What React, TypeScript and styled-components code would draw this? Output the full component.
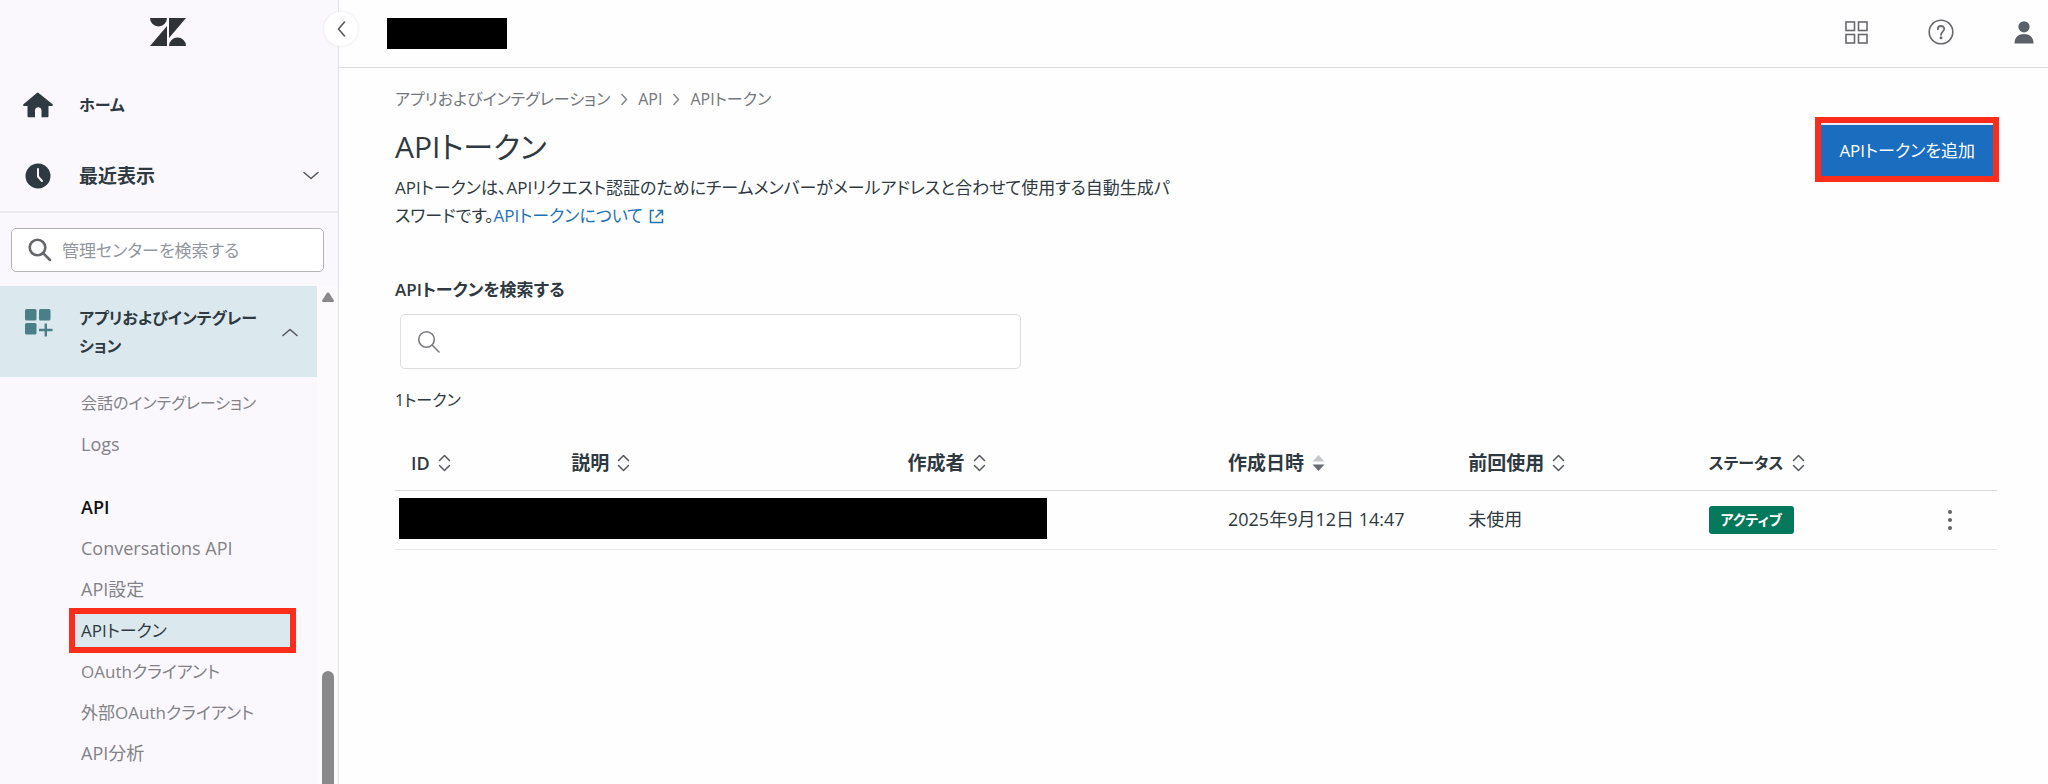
import React from "react";
import styled, { createGlobalStyle, css } from "styled-components";

const ink = "#2f3941";
const muted = "#828287";
const teal = "#4a7f88";
const highlight = "#dbe9ee";
const red = "#fc2d1b";

const sizes = { kana: "16px", mixed: "17px", latin: "18px", kanji: "19px" };
type Size = keyof typeof sizes;

const GlobalStyle = createGlobalStyle`
  * { box-sizing: border-box; }
  body {
    margin: 0;
    background: #fefefe;
    color: ${ink};
    font-family: "Open Sans", "Noto Sans CJK JP", sans-serif;
    font-size: ${sizes.mixed};
    line-height: 27px;
    font-feature-settings: "palt";
  }
  button, input { font: inherit; color: inherit; font-feature-settings: inherit; }
  button { padding: 0; border: 0; background: none; cursor: pointer; }
  a { color: inherit; text-decoration: none; }
  h1, h2, p, ul, ol { margin: 0; padding: 0; }
  ul, ol { list-style: none; }
  svg { display: block; flex: none; }
`;

const Page = styled.div`
  display: flex;
  min-height: 100vh;
`;

const Sidebar = styled.aside`
  position: relative;
  display: flex;
  flex-direction: column;
  flex: none;
  width: 339px;
  background: #faf8fc;
  border-right: 1px solid #e2e1e6;
`;

const LogoArea = styled.div`
  display: flex;
  justify-content: center;
  height: 69px;
  padding: 18px 2px 0 0;
`;

const CollapseButton = styled.button`
  position: absolute;
  top: 12px;
  right: -20px;
  display: flex;
  align-items: center;
  justify-content: center;
  width: 34px;
  height: 34px;
  border-radius: 50%;
  background: #fff;
  box-shadow: 0 0 3px #e4e0ea;
`;

const navRow = css`
  display: flex;
  align-items: center;
  width: 100%;
  height: 71px;
  padding: 0 19px 0 22px;
  font-weight: 600;
  text-align: left;
`;

const HomeLink = styled.a`
  ${navRow}
`;

const RecentButton = styled.button`
  ${navRow}
`;

const NavIcon = styled.span`
  display: flex;
  justify-content: center;
  width: 32px;
  margin-right: 25px;
`;

const NavLabel = styled.span<{ $size: Size }>`
  flex: 1;
  padding-top: 2px;
  font-size: ${(p) => sizes[p.$size]};
`;

const SidebarSearch = styled.div`
  padding: 15px 14px 14px 11px;
  border-top: 2px solid #ebeaef;
`;

const SearchBox = styled.div<{ $large?: boolean }>`
  display: flex;
  align-items: center;
  gap: ${(p) => (p.$large ? "12px" : "10px")};
  width: ${(p) => (p.$large ? "621px" : "100%")};
  max-width: 100%;
  height: ${(p) => (p.$large ? "55px" : "44px")};
  padding: 0 16px;
  border: 1px solid ${(p) => (p.$large ? "#dedde1" : "#b2b2b8")};
  border-radius: 5px;
  background: #fff;
`;

const SearchInput = styled.input`
  flex: 1;
  min-width: 0;
  padding: 0;
  border: 0;
  outline: 0;
  background: transparent;
  &::placeholder { color: #92969f; opacity: 1; }
`;

const ScrollArea = styled.div`
  display: flex;
  flex: 1;
`;

const SectionNav = styled.nav`
  flex: 1;
  min-width: 0;
`;

const SectionButton = styled.button`
  display: flex;
  align-items: center;
  width: 100%;
  padding: 18px 19px 17px 22px;
  background: ${highlight};
  font-size: ${sizes.kana};
  font-weight: 600;
  line-height: 28px;
  text-align: left;
`;

const SectionIcon = styled(NavIcon)`
  align-self: flex-start;
  padding: 5px 0 0 2px;
`;

const SectionLabel = styled.span`
  width: 184px;
  margin-right: auto;
`;

const SubList = styled.ul<{ $first?: boolean }>`
  padding: ${(p) => (p.$first ? "6px" : "0")} 27px 0 75px;
`;

const SubHeading = styled.h2`
  margin-top: 22px;
  padding-left: 81px;
  color: #111;
  font-size: ${sizes.latin};
  font-weight: 600;
  line-height: 41px;
`;

const SubItem = styled.li`
  padding: 4px 0;
`;

const SubLink = styled.a<{ $size: Size; $active?: boolean }>`
  display: block;
  padding-left: 6px;
  color: ${(p) => (p.$active ? ink : muted)};
  font-size: ${(p) => sizes[p.$size]};
  line-height: 33px;
  white-space: nowrap;
  ${(p) =>
    p.$active &&
    css`
      background: ${highlight};
      outline: 6px solid ${red};
    `}
`;

const ScrollTrack = styled.div`
  display: flex;
  flex-direction: column;
  justify-content: space-between;
  align-items: center;
  width: 21px;
  padding-top: 6px;
  background: #fcfafd;
`;

const ScrollThumb = styled.div`
  width: 12px;
  height: 23%;
  border-radius: 6px 6px 0 0;
  background: #89888a;
`;

const Content = styled.div`
  flex: 1;
  min-width: 0;
`;

const TopBar = styled.header`
  display: flex;
  align-items: center;
  justify-content: space-between;
  height: 68px;
  padding: 0 14px 1px 48px;
  border-bottom: 1px solid #dddde0;
`;

const Redacted = styled.div<{ $wide?: boolean }>`
  width: ${(p) => (p.$wide ? "648px" : "120px")};
  max-width: 100%;
  height: ${(p) => (p.$wide ? "41px" : "31px")};
  background: #000;
`;

const Tools = styled.div`
  display: flex;
  align-items: center;
  gap: 60px;
  padding-bottom: 2px;
`;

const IconButton = styled.button`
  display: flex;
  align-items: center;
  justify-content: center;
`;

const Main = styled.main`
  padding: 18px 51px 0 56px;
`;

const Breadcrumb = styled.ol`
  display: flex;
  align-items: center;
  gap: 10px;
  color: #74777d;
  font-size: ${sizes.kana};
`;

const Crumb = styled.li`
  display: flex;
  align-items: center;
  gap: 10px;
`;

const Heading = styled.div`
  display: flex;
  align-items: flex-start;
  justify-content: space-between;
`;

const Title = styled.h1`
  margin: 9px 0 2px;
  font-size: 30px;
  font-weight: 400;
  line-height: 50px;
`;

const Description = styled.p`
  width: 780px;
  max-width: 100%;
  line-height: 28px;
`;

const TextLink = styled.a`
  color: #1f73b7;
`;

const PrimaryButton = styled.button`
  height: 53px;
  margin: 10px 4px 0 0;
  padding: 0 18px;
  border-top: 2px solid #e8eef8;
  outline: 6px solid ${red};
  background: #1a6dbf;
  color: #fff;
  white-space: nowrap;
`;

const SearchField = styled.div`
  margin-top: 46px;
`;

const FieldLabel = styled.label`
  display: block;
  margin-bottom: 11px;
  font-weight: 600;
`;

const FieldInset = styled.div`
  padding-left: 5px;
`;

const Count = styled.p`
  margin: 18px 0 21px;
  font-size: ${sizes.kana};
`;

const TokenTable = styled.table`
  width: 100%;
  table-layout: fixed;
  border-collapse: collapse;
`;

const HeadCell = styled.th<{ $width: string; $size: Size }>`
  width: ${(p) => p.$width};
  height: 55px;
  padding: 2px 0 0 16px;
  border-bottom: 1px solid #d8dcde;
  font-size: ${(p) => sizes[p.$size]};
  font-weight: 600;
  text-align: left;
`;

const SortButton = styled.button`
  display: flex;
  align-items: center;
  gap: 8px;
`;

const Cell = styled.td<{ $tight?: boolean }>`
  height: 59px;
  padding: ${(p) => (p.$tight ? "0 0 2px 4px" : "0 0 0 16px")};
  border-bottom: 1px solid #e6e7e9;
  font-size: ${sizes.latin};
`;

const StatusRow = styled.div`
  display: flex;
  align-items: center;
  justify-content: space-between;
  padding-right: 37px;
`;

const Badge = styled.span`
  padding: 0 12px;
  border-radius: 3px;
  background: #03785a;
  color: #fff;
  font-size: 14px;
  font-weight: 600;
  line-height: 28px;
`;

const Chevron = ({ d, w, h }: { d: string; w: number; h: number }) => (
  <svg width={w} height={h} viewBox={`0 0 ${w} ${h}`} fill="none" stroke="#55585e" strokeWidth="1.6" strokeLinecap="round" strokeLinejoin="round">
    <path d={d} />
  </svg>
);

const CrumbArrow = () => (
  <svg width="8" height="13" viewBox="0 0 8 13" fill="none" stroke="#85888d" strokeWidth="1.5">
    <path d="M1.500 1 6.500 6.500 1.500 12" />
  </svg>
);

const Logo = () => (
  <svg width="36" height="28" viewBox="0 0 36 28" fill="#2f3338" role="img" aria-label="Zendesk">
    <path d="M0 0H17A8.500 8.500 0 0 1 0 0Z" />
    <path d="M17 8V28H0Z" />
    <path d="M19 0H36L19 20Z" />
    <path d="M19 28A8.500 8.500 0 0 1 36 28Z" />
  </svg>
);

const HomeIcon = () => (
  <svg width="32" height="26" viewBox="0 0 32 26" fill={ink}>
    <path d="M16 0.500 30.600 12.200C31.300 12.800 30.900 14 30 14H26.500V24C26.500 24.800 26 25.300 25.200 25.300H19.500V18.500C19.500 14.300 13 14.300 13 18.500V25.300H6.800C6 25.300 5.500 24.800 5.500 24V14H2C1.100 14 0.700 12.800 1.400 12.200L14.800 1Q16 0 17.200 1Z" />
  </svg>
);

const ClockIcon = () => (
  <svg width="26" height="26" viewBox="0 0 26 26" fill="none">
    <circle cx="13" cy="13" r="12.500" fill={ink} />
    <path d="M13 6V13.500L17 18" stroke="#faf8fc" strokeWidth="2" strokeLinecap="round" />
  </svg>
);

const AppsIcon = () => (
  <svg width="28" height="28" viewBox="0 0 28 28" fill={teal}>
    <rect x="0" y="0" width="11.500" height="11.500" rx="1.500" />
    <rect x="14" y="0" width="11.500" height="11.500" rx="1.500" />
    <rect x="0" y="14" width="11.500" height="11.500" rx="1.500" />
    <path d="M20.800 14.500V27.500M14 21H27.500" stroke={teal} strokeWidth="2.400" />
  </svg>
);

const SearchIcon = ({ weight, color }: { weight: number; color: string }) => (
  <svg width="24" height="24" viewBox="0 0 24 24" fill="none" stroke={color} strokeWidth={weight} strokeLinecap="round">
    <circle cx="9.500" cy="9.500" r="7.800" />
    <path d="M15.300 15.300 22 22" />
  </svg>
);

const GridIcon = () => (
  <svg width="23" height="23" viewBox="0 0 23 23" fill="none" stroke="#68696d" strokeWidth="1.600">
    <rect x="1" y="1" width="8.500" height="8.500" />
    <rect x="13.500" y="1" width="8.500" height="8.500" />
    <rect x="1" y="13.500" width="8.500" height="8.500" />
    <rect x="13.500" y="13.500" width="8.500" height="8.500" />
  </svg>
);

const HelpIcon = () => (
  <svg width="26" height="26" viewBox="0 0 26 26" fill="none" stroke="#68696d" strokeWidth="1.600" strokeLinecap="round">
    <circle cx="13" cy="13" r="11.800" />
    <path d="M9.800 10.300C9.800 5.800 16.300 6 16.200 10.100C16.100 12.600 13 12.800 13 15.800" strokeWidth="1.800" />
    <circle cx="13" cy="18.800" r="0.700" fill="#68696d" />
  </svg>
);

const UserIcon = () => (
  <svg width="20" height="23" viewBox="0 0 20 23" fill="#5b6168">
    <circle cx="10" cy="5.800" r="5.600" />
    <path d="M0.500 22.500C0.500 16 4.500 13 10 13S19.500 16 19.500 22.500Z" />
  </svg>
);

const InlineSvg = styled.svg`
  display: inline-block;
  margin-left: 6px;
  vertical-align: -2px;
`;

const ExternalIcon = () => (
  <InlineSvg width="15" height="15" viewBox="0 0 15 15" fill="none" stroke="#1f73b7" strokeWidth="1.500">
    <path d="M5 1.500H1.500V13.500H13.500V10M8.500 1.500H13.500V6.500M13.500 1.500 6.500 8.500" />
  </InlineSvg>
);

const SortIcon = ({ active }: { active?: boolean }) =>
  active ? (
    <svg width="13" height="18" viewBox="0 0 13 18">
      <path d="M0.500 7.500 6.500 1 12.500 7.500Z" fill="#c6c7ca" />
      <path d="M0.500 10.500 6.500 17 12.500 10.500Z" fill="#686c72" />
    </svg>
  ) : (
    <svg width="13" height="18" viewBox="0 0 13 18" fill="none" stroke="#55585e" strokeWidth="1.500" strokeLinecap="round" strokeLinejoin="round">
      <path d="M1.500 6.500 6.500 1.500 11.500 6.500M1.500 11.500 6.500 16.500 11.500 11.500" />
    </svg>
  );

const columns: { label: string; width: string; size: Size; active?: boolean }[] = [
  { label: "ID", width: "10%", size: "latin" },
  { label: "説明", width: "21%", size: "kanji" },
  { label: "作成者", width: "20%", size: "kanji" },
  { label: "作成日時", width: "15%", size: "kanji", active: true },
  { label: "前回使用", width: "15%", size: "kanji" },
  { label: "ステータス", width: "19%", size: "kana" },
];

type NavItem = { label: string; size: Size; active?: boolean };

const integrationLinks: NavItem[] = [
  { label: "会話のインテグレーション", size: "kana" },
  { label: "Logs", size: "latin" },
];

const apiLinks: NavItem[] = [
  { label: "Conversations API", size: "latin" },
  { label: "API設定", size: "latin" },
  { label: "APIトークン", size: "mixed", active: true },
  { label: "OAuthクライアント", size: "mixed" },
  { label: "外部OAuthクライアント", size: "mixed" },
  { label: "API分析", size: "latin" },
];

const NavItems = ({ items, first }: { items: NavItem[]; first?: boolean }) => (
  <SubList $first={first}>
    {items.map((item) => (
      <SubItem key={item.label}>
        <SubLink href="#section" $size={item.size} $active={item.active} aria-current={item.active ? "page" : undefined}>
          {item.label}
        </SubLink>
      </SubItem>
    ))}
  </SubList>
);

export default function App() {
  return (
    <>
      <GlobalStyle />
      <Page lang="ja">
        <Sidebar>
          <LogoArea>
            <Logo />
          </LogoArea>
          <CollapseButton aria-label="サイドバーを閉じる">
            <Chevron w={9} h={16} d="M7.500 1 1.500 8 7.500 15" />
          </CollapseButton>
          <HomeLink href="#home">
            <NavIcon><HomeIcon /></NavIcon>
            <NavLabel $size="kana">ホーム</NavLabel>
          </HomeLink>
          <RecentButton aria-expanded="false">
            <NavIcon><ClockIcon /></NavIcon>
            <NavLabel $size="kanji">最近表示</NavLabel>
            <Chevron w={16} h={9} d="M1 1.500 8 7.500 15 1.500" />
          </RecentButton>
          <SidebarSearch>
            <SearchBox>
              <SearchIcon weight={2.6} color="#65676b" />
              <SearchInput type="search" aria-label="管理センターを検索する" placeholder="管理センターを検索する" />
            </SearchBox>
          </SidebarSearch>
          <ScrollArea>
            <SectionNav>
              <SectionButton aria-expanded="true">
                <SectionIcon><AppsIcon /></SectionIcon>
                <SectionLabel>アプリおよびインテグレーション</SectionLabel>
                <Chevron w={16} h={9} d="M1 7.500 8 1.500 15 7.500" />
              </SectionButton>
              <NavItems items={integrationLinks} first />
              <SubHeading>API</SubHeading>
              <NavItems items={apiLinks} />
            </SectionNav>
            <ScrollTrack aria-hidden="true">
              <svg width="12" height="10" viewBox="0 0 12 10" fill="#89888a">
                <path d="M5 0.800Q6 -0.400 7 0.800L11.700 8Q12.200 10 11 10H1Q-0.200 10 0.300 8Z" />
              </svg>
              <ScrollThumb />
            </ScrollTrack>
          </ScrollArea>
        </Sidebar>
        <Content>
          <TopBar>
            <Redacted />
            <Tools>
              <IconButton aria-label="製品"><GridIcon /></IconButton>
              <IconButton aria-label="ヘルプ"><HelpIcon /></IconButton>
              <IconButton aria-label="プロフィール"><UserIcon /></IconButton>
            </Tools>
          </TopBar>
          <Main>
            <Breadcrumb>
              <Crumb>
                <a href="#apps">アプリおよびインテグレーション</a>
                <CrumbArrow />
              </Crumb>
              <Crumb>
                <a href="#api">API</a>
                <CrumbArrow />
              </Crumb>
              <Crumb>APIトークン</Crumb>
            </Breadcrumb>
            <Heading>
              <div>
                <Title>APIトークン</Title>
                <Description>
                  APIトークンは、APIリクエスト認証のためにチームメンバーがメールアドレスと合わせて使用する自動生成パスワードです。
                  <TextLink href="#about">APIトークンについて<ExternalIcon /></TextLink>
                </Description>
              </div>
              <PrimaryButton>APIトークンを追加</PrimaryButton>
            </Heading>
            <SearchField>
              <FieldLabel htmlFor="token-search">APIトークンを検索する</FieldLabel>
              <FieldInset>
                <SearchBox $large>
                  <SearchIcon weight={1.6} color="#7a7b7f" />
                  <SearchInput id="token-search" type="search" />
                </SearchBox>
              </FieldInset>
            </SearchField>
            <Count>1トークン</Count>
            <TokenTable>
              <thead>
                <tr>
                  {columns.map((c) => (
                    <HeadCell key={c.label} $width={c.width} $size={c.size}>
                      <SortButton>
                        {c.label}
                        <SortIcon active={c.active} />
                      </SortButton>
                    </HeadCell>
                  ))}
                </tr>
              </thead>
              <tbody>
                <tr>
                  <Cell colSpan={3} $tight><Redacted $wide /></Cell>
                  <Cell>2025年9月12日 14:47</Cell>
                  <Cell>未使用</Cell>
                  <Cell>
                    <StatusRow>
                      <Badge>アクティブ</Badge>
                      <IconButton aria-label="操作">
                        <svg width="20" height="22" viewBox="0 0 20 22" fill="#5f6368">
                          <circle cx="10" cy="3" r="2" />
                          <circle cx="10" cy="11" r="2" />
                          <circle cx="10" cy="19" r="2" />
                        </svg>
                      </IconButton>
                    </StatusRow>
                  </Cell>
                </tr>
              </tbody>
            </TokenTable>
          </Main>
        </Content>
      </Page>
    </>
  );
}
